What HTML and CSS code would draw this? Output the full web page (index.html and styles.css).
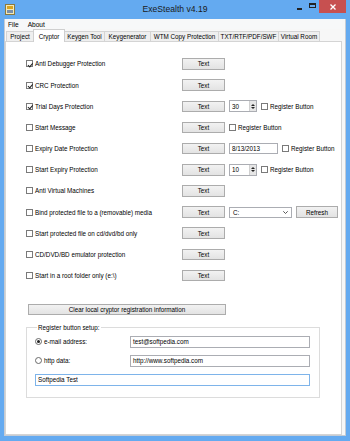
FILE: index.html
```html
<!DOCTYPE html>
<html>
<head>
<meta charset="utf-8">
<link rel="stylesheet" href="styles.css">
</head>
<body>
<div class="window">
  <div class="titlebar">
    <div class="tb-left">
      <svg class="app-icon" width="10" height="11" viewBox="0 0 10 11">
        <rect x="0.5" y="0.5" width="9" height="10" fill="#f4e9b8" stroke="#8a7a40"/>
        <rect x="2" y="2" width="6" height="3" fill="#d9a520"/>
        <rect x="2" y="6" width="6" height="3" fill="#7a8fa8"/>
      </svg>
    </div>
    <div class="tb-title">ExeStealth v4.19</div>
    <div class="tb-controls">
      <span class="ctl ctl-min"><span class="min-bar"></span></span>
      <span class="ctl ctl-max"><span class="max-box"></span></span>
      <span class="ctl ctl-close">
        <svg width="6" height="6" viewBox="0 0 6 6"><path d="M0.5 0.5 L5.5 5.5 M5.5 0.5 L0.5 5.5" stroke="#fff" stroke-width="1.3"/></svg>
      </span>
    </div>
  </div>
  <div class="client">
    <div class="menubar"><span class="menu-item">File</span><span class="menu-item">About</span></div>
    <div class="tabs">
      <span class="tab t-project">Project</span>
      <span class="tab tab-active t-cryptor">Cryptor</span>
      <span class="tab t-keygen">Keygen Tool</span>
      <span class="tab t-keygenerator">Keygenerator</span>
      <span class="tab t-wtm">WTM Copy Protection</span>
      <span class="tab t-txt">TXT/RTF/PDF/SWF</span>
      <span class="tab t-vr">Virtual Room</span>
    </div>
    <div class="panel">
      <div class="options">
        <div class="row">
          <label class="chk"><span class="box checked"></span><span>Anti Debugger Protection</span></label>
          <span class="btn">Text</span>
        </div>
        <div class="row">
          <label class="chk"><span class="box checked"></span><span>CRC Protection</span></label>
          <span class="btn">Text</span>
        </div>
        <div class="row">
          <label class="chk"><span class="box checked"></span><span>Trial Days Protection</span></label>
          <span class="btn">Text</span>
          <div class="extras">
            <span class="spin"><span class="spin-val">30</span><span class="spin-arrows"><span class="up"></span><span class="down"></span></span></span>
            <label class="chk"><span class="box"></span><span>Register Button</span></label>
          </div>
        </div>
        <div class="row">
          <label class="chk"><span class="box"></span><span>Start Message</span></label>
          <span class="btn">Text</span>
          <div class="extras">
            <label class="chk"><span class="box"></span><span>Register Button</span></label>
          </div>
        </div>
        <div class="row">
          <label class="chk"><span class="box"></span><span>Expiry Date Protection</span></label>
          <span class="btn">Text</span>
          <div class="extras">
            <span class="field date">8/13/2013</span>
            <label class="chk"><span class="box"></span><span>Register Button</span></label>
          </div>
        </div>
        <div class="row">
          <label class="chk"><span class="box"></span><span>Start Expiry Protection</span></label>
          <span class="btn">Text</span>
          <div class="extras">
            <span class="spin"><span class="spin-val">10</span><span class="spin-arrows"><span class="up"></span><span class="down"></span></span></span>
            <label class="chk"><span class="box"></span><span>Register Button</span></label>
          </div>
        </div>
        <div class="row">
          <label class="chk"><span class="box"></span><span>Anti Virtual Machines</span></label>
          <span class="btn">Text</span>
        </div>
        <div class="row">
          <label class="chk"><span class="box"></span><span>Bind protected file to a (removable) media</span></label>
          <span class="btn">Text</span>
          <div class="extras">
            <span class="combo"><span>C:</span>
              <svg class="chev" width="5" height="3" viewBox="0 0 5 3"><path d="M0.3 0.3 L2.5 2.5 L4.7 0.3" fill="none" stroke="#444" stroke-width="0.9"/></svg>
            </span>
            <span class="btn btn-refresh">Refresh</span>
          </div>
        </div>
        <div class="row">
          <label class="chk"><span class="box"></span><span>Start protected file on cd/dvd/bd only</span></label>
          <span class="btn">Text</span>
        </div>
        <div class="row">
          <label class="chk"><span class="box"></span><span>CD/DVD/BD emulator protection</span></label>
          <span class="btn">Text</span>
        </div>
        <div class="row">
          <label class="chk"><span class="box"></span><span>Start in a root folder only (e:\)</span></label>
          <span class="btn">Text</span>
        </div>
      </div>
      <div class="clear-row"><span class="btn btn-clear">Clear local cryptor registration information</span></div>
      <fieldset class="group">
        <legend>Register button setup:</legend>
        <div class="grow">
          <label class="rad"><span class="radio on"></span><span>e-mail address:</span></label>
          <span class="field wide">test@softpedia.com</span>
        </div>
        <div class="grow">
          <label class="rad"><span class="radio"></span><span>http data:</span></label>
          <span class="field wide">http://www.softpedia.com</span>
        </div>
        <div class="grow single">
          <span class="field full focus">Softpedia Test</span>
        </div>
      </fieldset>
    </div>
  </div>
</div>
</body>
</html>
```

FILE: styles.css
```css
* { box-sizing: border-box; }
html, body { margin: 0; padding: 0; }
body {
  font-family: "Liberation Sans", Arial, sans-serif;
  font-size: 6.3px;
  color: #000;
  background: #fff;
}
.window {
  width: 350px;
  height: 441px;
  background: #64aaf0;
  display: flex;
  flex-direction: column;
  padding: 0 4px 5px 4px;
}
.titlebar {
  height: 19px;
  display: grid;
  grid-template-columns: 1fr auto 1fr;
  align-items: start;
}
.tb-left { padding: 4px 0 0 1px; }
.app-icon { display: block; }
.tb-title {
  font-family: "Liberation Sans", Arial, sans-serif;
  font-size: 8.6px;
  color: #1a1a1a;
  padding-top: 4px;
}
.tb-controls {
  display: flex;
  justify-content: flex-end;
  align-items: flex-start;
}
.ctl { display: flex; align-items: center; justify-content: center; height: 13px; }
.ctl-min { width: 13px; }
.min-bar { width: 5px; height: 1.5px; background: #222; margin-top: 5px; }
.ctl-max { width: 13px; }
.max-box { width: 7px; height: 5px; border: 1px solid #222; border-top-width: 2px; margin-bottom: 2px; }
.ctl-close { width: 27px; background: #c75050; }
.client {
  flex: 1;
  background: #f7f7f7;
  border: 1px solid #c4cbd4;
  border-top: none;
  display: flex;
  flex-direction: column;
  padding: 0 3px 0 0;
}
.menubar {
  height: 10px;
  display: flex;
  align-items: center;
  padding-left: 3px;
  gap: 9px;
  background: #f7f8f9;
}
.menu-item { font-size: 6.6px; }
.tabs {
  height: 12px;
  display: flex;
  align-items: flex-end;
  padding-left: 1px;
  position: relative;
}
.tab {
  height: 10px;
  border: 1px solid #d4d4d4;
  border-bottom: none;
  background: #efefef;
  display: flex;
  align-items: center;
  justify-content: center;
  margin-right: -1px;
  font-size: 6.3px;
}
.tab-active {
  height: 13px;
  background: #fff;
  margin-bottom: -1px;
  position: relative;
  z-index: 2;
  border-color: #cfcfcf;
}
.t-project { width: 28px; }
.t-cryptor { width: 32px; }
.t-keygen { width: 41px; }
.t-keygenerator { width: 47px; }
.t-wtm { width: 69px; }
.t-txt { width: 61px; }
.t-vr { width: 42px; }
.panel {
  flex: 1;
  background: #fff;
  border: 1px solid #d4d4d4;
  position: relative;
  padding-top: 11.4px;
}
.options { padding-left: 20px; position: relative; }
.row {
  height: 21.17px;
  display: grid;
  grid-template-columns: 156px 43px auto;
  align-items: center;
}
.chk, .rad { display: flex; align-items: center; gap: 2px; white-space: nowrap; }
.box {
  width: 7px;
  height: 7px;
  border: 1px solid #7a7a7a;
  background: #fff;
  flex: none;
  position: relative;
}
.box.checked::after {
  content: "";
  position: absolute;
  left: 1.6px;
  top: 0.2px;
  width: 1.6px;
  height: 3.6px;
  border: solid #222;
  border-width: 0 1.3px 1.3px 0;
  transform: rotate(40deg);
}
.btn {
  height: 11.5px;
  border: 1px solid #acacac;
  background: linear-gradient(#f2f2f2, #e3e3e3);
  display: flex;
  align-items: center;
  justify-content: center;
  white-space: nowrap;
}
.extras { display: flex; align-items: center; gap: 4px; padding-left: 4px; }
.spin {
  width: 28px;
  height: 12px;
  border: 1px solid #abadb3;
  background: #fff;
  display: flex;
  align-items: center;
  justify-content: space-between;
  padding-left: 2px;
}
.spin-arrows {
  width: 7px;
  height: 10px;
  background: #e6e6e6;
  border-left: 1px solid #d0d0d0;
  display: flex;
  flex-direction: column;
  align-items: center;
  justify-content: center;
  gap: 1px;
}
.up { width: 0; height: 0; border-left: 2px solid transparent; border-right: 2px solid transparent; border-bottom: 2px solid #222; }
.down { width: 0; height: 0; border-left: 2px solid transparent; border-right: 2px solid transparent; border-top: 2px solid #222; }
.field {
  height: 11.5px;
  border: 1px solid #abadb3;
  background: #fff;
  display: flex;
  align-items: center;
  padding-left: 2px;
  white-space: nowrap;
}
.date { width: 49px; }
.combo {
  width: 63px;
  height: 11px;
  border: 1px solid #abadb3;
  background: #fff;
  display: flex;
  align-items: center;
  justify-content: space-between;
  padding: 0 3px 0 3px;
}
.chev { display: block; }
.btn-refresh { width: 42px; }
.clear-row { padding: 17.8px 0 0 22px; }
.btn-clear { width: 198px; }
.group {
  margin: 9px 0 0 20px;
  width: 294px;
  border: 1px solid #dcdcdc;
  padding: 1px 8px 8px 8px;
}
.group legend {
  padding: 0 1px;
  margin-left: 2px;
  font-size: 6.3px;
}
.grow {
  display: grid;
  grid-template-columns: 95px 1fr;
  align-items: center;
  height: 19px;
}
.grow.single { grid-template-columns: 1fr; }
.radio {
  width: 7px;
  height: 7px;
  border: 1px solid #6a6a6a;
  border-radius: 50%;
  background: #fff;
  position: relative;
  flex: none;
}
.radio.on::after {
  content: "";
  position: absolute;
  left: 1px; top: 1px;
  width: 3px; height: 3px;
  border-radius: 50%;
  background: #222;
}
.rad { gap: 2px; }
.field.wide { width: 180px; }
.field.full { width: 275px; height: 12px; }
.field.focus { border-color: #7eb4ea; }
```
